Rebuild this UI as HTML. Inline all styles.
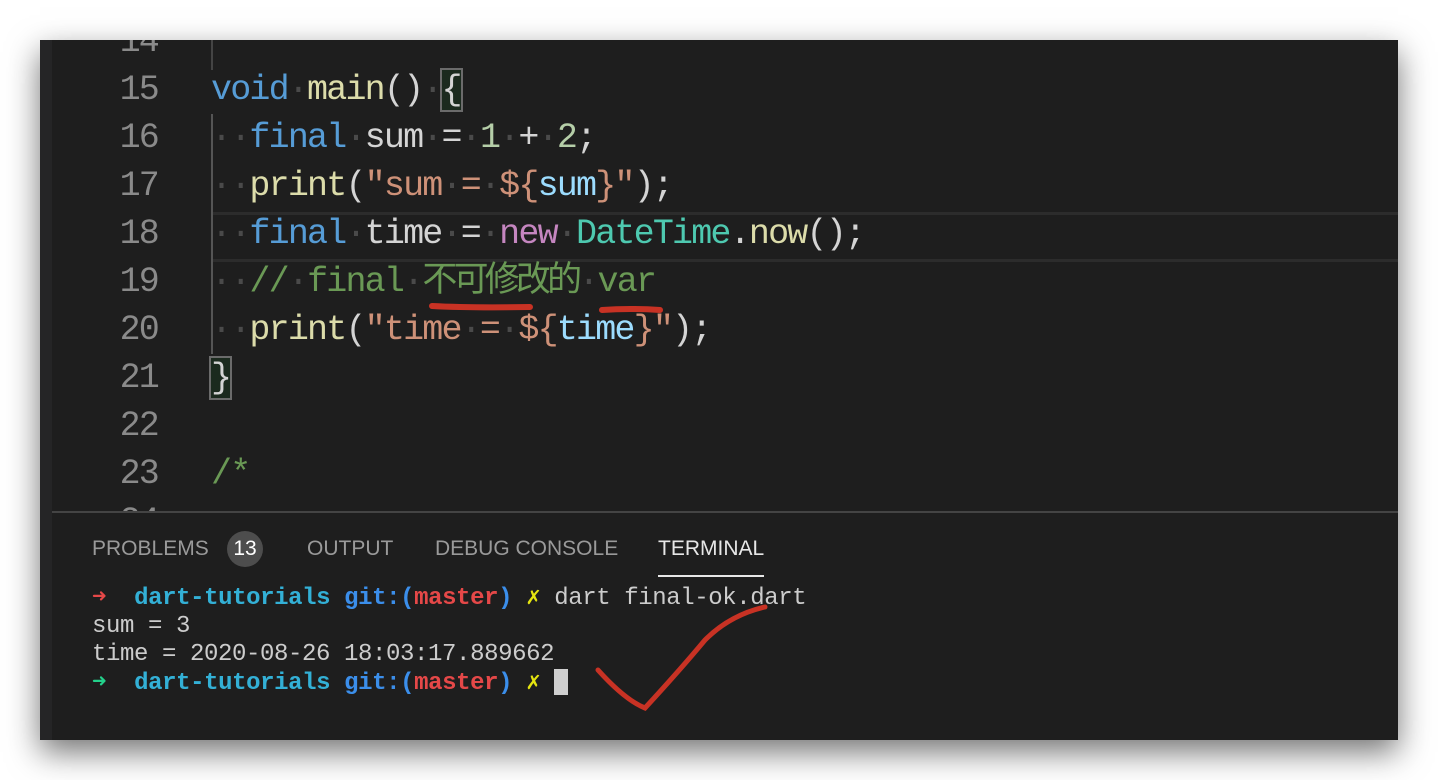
<!DOCTYPE html>
<html><head><meta charset="utf-8"><style>
body{margin:0;width:1438px;height:780px;background:#fff;position:relative;overflow:hidden}
#win{position:absolute;left:40px;top:40px;width:1358px;height:700px;background:#1e1e1e;box-shadow:0 12px 30px rgba(0,0,0,.55);overflow:hidden}
#strip{position:absolute;left:0;top:0;width:12px;height:700px;background:#252526}
.ln{position:absolute;left:40px;width:78px;text-align:right;font:35px "Liberation Mono",monospace;letter-spacing:-1.8px;color:#8a8a8a;line-height:48px;height:48px}
.cl{position:absolute;left:171px;font:35px "Liberation Mono","Noto Sans CJK SC",monospace;letter-spacing:-1.8px;line-height:48px;height:48px;white-space:pre;color:#d4d4d4}
.d{color:#4a4a4a}
.kw{color:#569cd6}.fn{color:#dcdcaa}.st{color:#ce9178}.nu{color:#b5cea8}.vr{color:#9cdcfe}.ty{color:#4ec9b0}.nw{color:#c586c0}.cm{color:#6a9955}
.box{outline:2px solid #6b6b6b;background:#1b2a1e}
.tab{position:absolute;top:497px;font:21px "Liberation Sans",sans-serif;color:#9a9a9a}
.t{position:absolute;left:52px;font:24px "Liberation Mono",monospace;letter-spacing:-0.4px;color:#cccccc;white-space:pre;line-height:28px}
.b{font-weight:bold}
</style></head><body>
<div id="win">
<div id="strip"></div>
<div style="position:absolute;left:171px;top:172px;width:1187px;height:44px;border-top:3px solid #2c2c2c;border-bottom:3px solid #2c2c2c"></div>
<div style="position:absolute;left:171px;top:0;width:2px;height:30px;background:#444"></div>
<div style="position:absolute;left:171px;top:74px;width:2px;height:240px;background:#555"></div>
<div class="ln" style="top:-22px">14</div>
<div class="ln" style="top:26px">15</div><div class="cl" style="top:26px"><span class="kw">void</span><span class="d">·</span><span class="fn">main</span>()<span class="d">·</span><span class="box">{</span></div>
<div class="ln" style="top:74px">16</div><div class="cl" style="top:74px"><span class="d">··</span><span class="kw">final</span><span class="d">·</span>sum<span class="d">·</span>=<span class="d">·</span><span class="nu">1</span><span class="d">·</span>+<span class="d">·</span><span class="nu">2</span>;</div>
<div class="ln" style="top:122px">17</div><div class="cl" style="top:122px"><span class="d">··</span><span class="fn">print</span>(<span class="st">"sum<span class="d">·</span>=<span class="d">·</span>${</span><span class="vr">sum</span><span class="st">}"</span>);</div>
<div class="ln" style="top:170px">18</div><div class="cl" style="top:170px"><span class="d">··</span><span class="kw">final</span><span class="d">·</span>time<span class="d">·</span>=<span class="d">·</span><span class="nw">new</span><span class="d">·</span><span class="ty">DateTime</span>.<span class="fn">now</span>();</div>
<div class="ln" style="top:218px">19</div><div class="cl cm" style="top:218px"><span class="d">··</span>//<span class="d">·</span>final<span class="d">·</span><span style="letter-spacing:-3.8px">不可修改的</span><span class="d">·</span>var</div>
<div class="ln" style="top:266px">20</div><div class="cl" style="top:266px"><span class="d">··</span><span class="fn">print</span>(<span class="st">"time<span class="d">·</span>=<span class="d">·</span>${</span><span class="vr">time</span><span class="st">}"</span>);</div>
<div class="ln" style="top:314px">21</div><div class="cl" style="top:314px"><span class="box">}</span></div>
<div class="ln" style="top:362px">22</div>
<div class="ln" style="top:410px">23</div><div class="cl cm" style="top:410px">/*</div>
<div class="ln" style="top:458px">24</div>
<svg style="position:absolute;left:0;top:0" width="1358" height="700"><path d="M392 266 Q430 268 490 267" stroke="#c83224" stroke-width="6" fill="none" stroke-linecap="round"/><path d="M562 270 Q590 268 620 270" stroke="#c83224" stroke-width="6" fill="none" stroke-linecap="round"/></svg>
<div style="position:absolute;left:12px;top:471px;width:1346px;height:229px;background:#1e1e1e;border-top:2px solid #444"></div>
<div class="tab" style="left:52px">PROBLEMS</div>
<div style="position:absolute;left:187px;top:491px;width:36px;height:36px;border-radius:18px;background:#4d4d4d;color:#fff;font:21px 'Liberation Sans',sans-serif;text-align:center;line-height:36px">13</div>
<div class="tab" style="left:267px">OUTPUT</div>
<div class="tab" style="left:395px">DEBUG CONSOLE</div>
<div class="tab" style="left:618px;color:#e7e7e7">TERMINAL</div>
<div style="position:absolute;left:618px;top:535px;width:106px;height:2px;background:#e7e7e7"></div>
<div class="t" style="top:545px"><span style="color:#e54848">➜</span>  <span class="b" style="color:#33b0d6">dart-tutorials</span> <span class="b" style="color:#3b8eea">git:(</span><span class="b" style="color:#e54848">master</span><span class="b" style="color:#3b8eea">)</span> <span style="color:#e5e510">✗</span> dart final-ok.dart</div>
<div class="t" style="top:573px">sum = 3</div>
<div class="t" style="top:601px">time = 2020-08-26 18:03:17.889662</div>
<div class="t" style="top:629px"><span style="color:#23d18b">➜</span>  <span class="b" style="color:#33b0d6">dart-tutorials</span> <span class="b" style="color:#3b8eea">git:(</span><span class="b" style="color:#e54848">master</span><span class="b" style="color:#3b8eea">)</span> <span style="color:#e5e510">✗</span> <span style="display:inline-block;width:14px;height:26px;background:#cfcfcf;vertical-align:-6px"></span></div>
<svg style="position:absolute;left:0;top:0" width="1358" height="700"><path d="M558 630 Q585 660 605 668 Q640 630 665 600 Q690 575 725 567" stroke="#c83224" stroke-width="5" fill="none" stroke-linecap="round"/></svg>
</div>
</body></html>
